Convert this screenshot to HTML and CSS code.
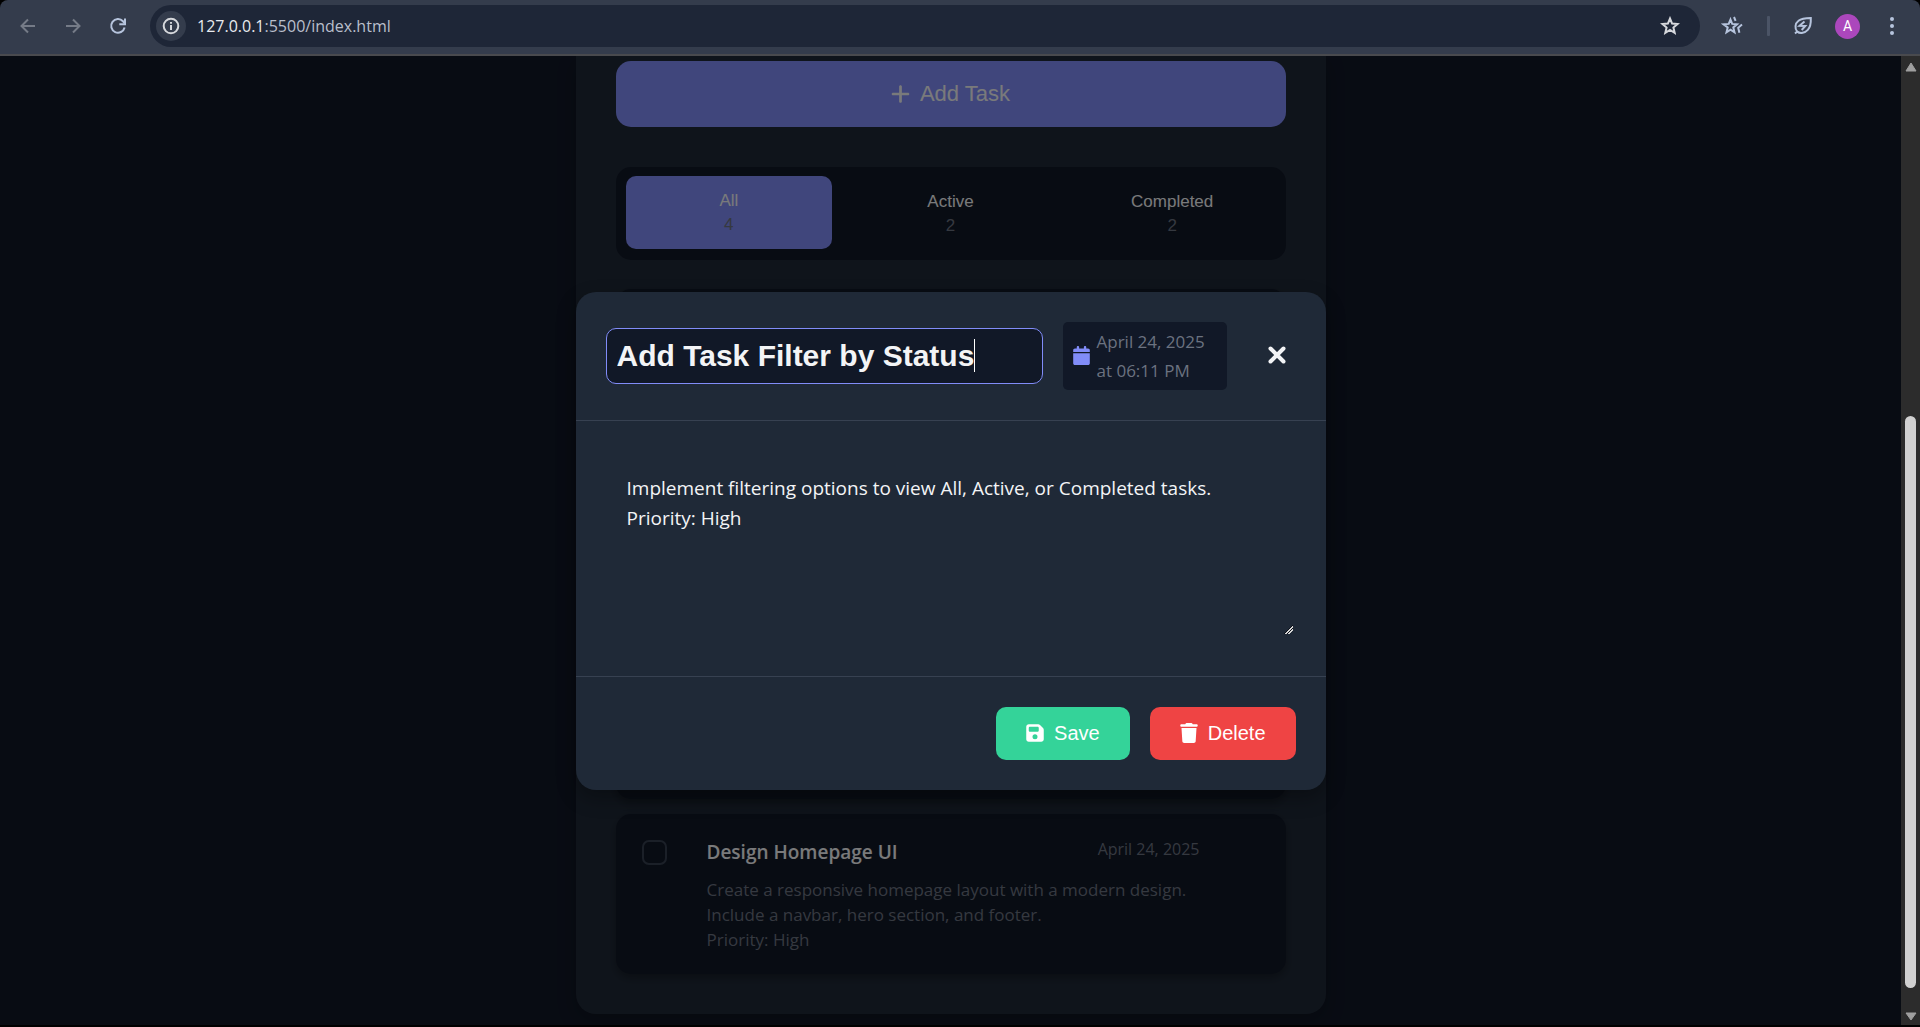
FILE: index.html
```html
<!DOCTYPE html>
<html lang="en">
<head>
<meta charset="utf-8">
<title>Task Manager</title>
<link rel="stylesheet" href="styles.css">
</head>
<body>
<div class="browser">
  <header class="toolbar">
    <button class="nav-btn dim" aria-label="Back"><svg viewBox="0 0 18 18" width="18" height="18"><path d="M16 9H3M9 2.500L2.500 9L9 15.500"/></svg></button>
    <button class="nav-btn dim" aria-label="Forward"><svg viewBox="0 0 18 18" width="18" height="18"><path d="M2 9h13M9 2.500L15.500 9L9 15.500"/></svg></button>
    <button class="nav-btn" aria-label="Reload"><svg viewBox="0 0 18 18" width="18" height="18"><path d="M15.600 10.500A6.800 6.800 0 1 1 14 4.300L15.500 6"/><path d="M10.300 7.200H16V1.500" /></svg></button>
    <div class="address">
      <button class="site-info" aria-label="Site information"><svg viewBox="0 0 18 18" width="18" height="18"><circle cx="9" cy="9" r="7.300"/><path d="M9 8v5M9 5v1.800"/></svg></button>
      <span class="url"><span class="host">127.0.0.1</span>:5500/index.html</span>
      <button class="icon-btn light" aria-label="Bookmark"><svg viewBox="0 0 20 20" width="20" height="20"><path d="M10 2.500l2.100 5.100 5.400.4-4.100 3.500 1.300 5.300L10 14l-4.700 2.800 1.300-5.300L2.500 8l5.400-.4z"/></svg></button>
    </div>
    <div class="actions">
      <button class="icon-btn" aria-label="Bookmarks"><svg viewBox="0 0 22 20" width="22" height="20"><path d="M9.500 3.500l1.700 4.400 4.800.4-3.700 3.100 1.200 4.900-4-2.600-4 2.600 1.200-4.900L2.500 8.300l5.200-.4z"/><path d="M13 1l1.600 3.800M21 8.600l-3.800 3.200 1.200 5"/></svg></button>
      <span class="divider"></span>
      <button class="icon-btn" aria-label="Energy saver"><svg viewBox="0 0 20 20" width="20" height="20"><path d="M2 17.500l2.200-1.900M4.200 15.600C1.500 12.500 2 7.500 5.500 4.800 8.500 2.300 13.500 2 17.800 2c.2 4.500-.3 9-3 11.900-2.800 3-7.500 4.200-10.600 1.700z"/><path class="thin" d="M11.500 5.500L6.500 9.800l5.800.2-3.600 4"/></svg></button>
      <button class="avatar" aria-label="Profile">A</button>
      <button class="menu" aria-label="Menu"><svg viewBox="0 0 6 20" width="6" height="20"><circle cx="3" cy="3" r="2"/><circle cx="3" cy="10" r="2"/><circle cx="3" cy="17" r="2"/></svg></button>
    </div>
  </header>

  <div class="viewport">
    <div class="page">
      <main class="container">
        <button class="add-btn"><svg viewBox="0 0 448 512" width="19" height="22"><path d="M256 80c0-17.700-14.300-32-32-32s-32 14.300-32 32V224H48c-17.700 0-32 14.300-32 32s14.300 32 32 32H192V432c0 17.700 14.300 32 32 32s32-14.300 32-32V288H400c17.700 0 32-14.300 32-32s-14.300-32-32-32H256V80z"/></svg>Add Task</button>

        <div class="filters">
          <button class="filter active">All<span>4</span></button>
          <button class="filter">Active<span>2</span></button>
          <button class="filter">Completed<span>2</span></button>
        </div>

        <ul class="tasks">
          <li class="task"></li>
          <li class="task"></li>
          <li class="task"></li>
          <li class="task">
            <input type="checkbox" class="check" id="task-4">
            <div class="task-body">
              <div class="task-head">
                <label class="task-title" for="task-4">Design Homepage UI</label>
                <time class="task-date">April 24, 2025</time>
              </div>
              <p class="task-text">Create a responsive homepage layout with a modern design.<br>Include a navbar, hero section, and footer.<br>Priority: High</p>
            </div>
          </li>
        </ul>
      </main>

      <div class="overlay">
        <section class="modal" role="dialog" aria-label="Edit task">
          <div class="modal-head">
            <div class="title-field">
              <input class="title-input" type="text" value="Add Task Filter by Status" aria-label="Task title">
              <span class="caret"></span>
            </div>
            <div class="stamp">
              <svg viewBox="0 0 448 512" width="17" height="19"><path d="M96 32V64H48C21.500 64 0 85.500 0 112v48H448V112c0-26.500-21.500-48-48-48H352V32c0-17.700-14.300-32-32-32s-32 14.300-32 32V64H160V32c0-17.700-14.300-32-32-32S96 14.300 96 32zM448 192H0V464c0 26.500 21.500 48 48 48H400c26.500 0 48-21.500 48-48V192z"/></svg>
              <time>April 24, 2025<br>at 06:11 PM</time>
            </div>
            <button class="close" aria-label="Close"><svg viewBox="0 0 18 18" width="18" height="18"><path d="M2.500 2.500l13 13M15.500 2.500l-13 13"/></svg></button>
          </div>
          <div class="modal-body">
            <textarea class="desc" aria-label="Task description">Implement filtering options to view All, Active, or Completed tasks.
Priority: High</textarea>
          </div>
          <div class="modal-foot">
            <button class="btn save"><svg viewBox="0 0 448 512" width="18" height="20"><path d="M64 32C28.700 32 0 60.700 0 96V416c0 35.300 28.700 64 64 64H384c35.300 0 64-28.700 64-64V173.300c0-17-6.700-33.300-18.700-45.300L352 50.700C340 38.700 323.700 32 306.700 32H64zm0 96c0-17.700 14.300-32 32-32H288c17.700 0 32 14.300 32 32v64c0 17.700-14.300 32-32 32H96c-17.700 0-32-14.300-32-32V128zM224 288a64 64 0 1 1 0 128 64 64 0 1 1 0-128z"/></svg>Save</button>
            <button class="btn delete"><svg viewBox="0 0 448 512" width="18" height="20"><path d="M135.200 17.700L128 32H32C14.300 32 0 46.300 0 64S14.300 96 32 96H416c17.700 0 32-14.300 32-32s-14.300-32-32-32H320l-7.200-14.300C307.400 6.800 296.300 0 284.200 0H163.800c-12.100 0-23.200 6.800-28.600 17.700zM416 128H32L53.200 467c1.600 25.300 22.600 45 47.900 45H346.900c25.300 0 46.300-19.700 47.900-45L416 128z"/></svg>Delete</button>
          </div>
        </section>
      </div>
    </div>
    <div class="scrollbar">
      <svg viewBox="0 0 12 10" width="12" height="10"><path d="M6 1L11 9H1z"/></svg>
      <div class="track"><div class="thumb"></div></div>
      <svg viewBox="0 0 12 10" width="12" height="10"><path d="M1 1h10L6 8z"/></svg>
    </div>
  </div>
</div>
</body>
</html>
```
FILE: styles.css
```css
:root {
  --ui: "Open Sans", "Noto Sans", sans-serif;
  --arial: "Liberation Sans", Arial, sans-serif;
  --bg: #111827;
  --surface: #1f2937;
  --text: #f3f4f6;
  --muted: #6b7280;
  --line: #374151;
  --accent: #818cf8;
}
* { box-sizing: border-box; margin: 0; }
body { background: #000; font-family: var(--ui); color: var(--text); }
button { border: 0; padding: 0; background: none; color: inherit; font-family: var(--arial); cursor: pointer; }
svg { display: block; flex: none; }

.browser { height: 100vh; display: flex; flex-direction: column; padding-bottom: 2px; }

/* Browser toolbar */
.toolbar {
  flex: none;
  display: flex;
  align-items: center;
  height: 56px;
  padding: 0 25px 2px 10px;
  background: #343c4c;
  border-bottom: 2px solid #494a4e;
  border-radius: 8px 8px 0 0;
}
.nav-btn { width: 45px; display: grid; place-items: center; padding-right: 10px; }
.toolbar svg { fill: none; stroke: #b6c4dd; stroke-width: 2; }
.toolbar .thin { stroke-width: 2; }
.toolbar .dim svg { stroke: #757b87; }
.address {
  flex: 1;
  display: flex;
  align-items: center;
  height: 42px;
  margin-left: 5px;
  padding: 0 20px 0 6px;
  border-radius: 21px;
  background: #1e2637;
}
.site-info { width: 30px; height: 30px; border-radius: 50%; background: #343c4c; display: grid; place-items: center; }
.toolbar .site-info svg, .toolbar .light svg { stroke: #d6d8dc; }
.url { flex: 1; margin-left: 11px; font-size: 16px; color: #b9bfcc; }
.host { color: #e8eaee; }
.actions { display: flex; align-items: center; margin-left: 21px; }
.divider { width: 3px; height: 20px; border-radius: 1px; margin: 0 23px 0 24px; background: #4b5466; }
.avatar { width: 25px; height: 25px; margin: 0 29px 0 22px; border-radius: 50%; background: #ab47bc; color: #fff; font-family: Roboto, sans-serif; font-size: 14px; }
.toolbar .menu svg { fill: #b6c4dd; stroke: none; }

/* Scrolled page */
.viewport { flex: 1; min-height: 0; display: flex; }
.page { position: relative; flex: 1; overflow: hidden; background: var(--bg); }
.container {
  max-width: 750px;
  margin: 0 auto;
  padding: 5px 40px 40px;
  background: var(--surface);
  border-radius: 0 0 20px 20px;
  box-shadow: 0 8px 20px rgba(0, 0, 0, .2);
}
.add-btn {
  display: flex;
  align-items: center;
  justify-content: center;
  gap: 10px;
  width: 100%;
  height: 66px;
  border-radius: 15px;
  background: var(--accent);
  font-size: 22px;
}
.add-btn svg, .btn svg { fill: currentColor; }
.filters { display: flex; gap: 15px; margin: 40px 0 29px; padding: 10px; border-radius: 15px; background: var(--bg); }
.filter { flex: 1; padding: 15px 0 14px; border-radius: 10px; font-size: 17px; line-height: 20px; }
.filter span { display: block; margin-top: 4px; color: var(--muted); }
.filter.active { background: var(--accent); transform: translateY(-1px); }
.tasks { display: flex; flex-direction: column; gap: 15px; padding: 0; list-style: none; }
.task {
  display: flex;
  gap: 40px;
  min-height: 160px;
  padding: 26px 26px 20px;
  border-radius: 15px;
  background: var(--bg);
  box-shadow: 0 4px 8px rgba(0, 0, 0, .3);
}
.check { appearance: none; flex: none; width: 25px; height: 25px; border: 2px solid var(--line); border-radius: 7px; }
.task-body { flex: 1; padding-right: 60px; }
.task-head { display: flex; justify-content: space-between; }
.task-title { font-size: 19px; font-weight: 600; line-height: 24px; }
.task-date { color: var(--muted); font-size: 16px; line-height: 18px; }
.task-text { margin-top: 13px; color: var(--muted); font-size: 17px; line-height: 25px; white-space: nowrap; }

/* Edit dialog */
.overlay { position: absolute; inset: 0; display: flex; align-items: center; justify-content: center; background: rgba(0, 0, 0, .5); }
.modal { width: 750px; max-width: 100%; border-radius: 20px; background: var(--surface); box-shadow: 0 8px 20px rgba(0, 0, 0, .3); }
.modal-head { display: flex; align-items: center; gap: 20px; padding: 30px; border-bottom: 1px solid var(--line); }
.title-field { position: relative; flex: 1; min-width: 0; }
.title-input {
  display: block;
  width: 100%;
  height: 56px;
  padding: 0 10px;
  border: 1px solid var(--accent);
  border-radius: 10px;
  outline: 0;
  background: var(--bg);
  color: var(--text);
  caret-color: transparent;
  font: bold 30px var(--arial);
}
.caret { position: absolute; left: 368px; top: 11px; width: 1px; height: 33px; background: #fff; }
.stamp { display: flex; align-items: center; gap: 7px; width: 164px; height: 68px; padding: 0 10px; border-radius: 5px; background: var(--bg); color: var(--muted); font-size: 17px; line-height: 29px; }
.stamp svg { fill: var(--accent); }
.stamp time { white-space: nowrap; }
.close { width: 37px; height: 48px; display: grid; place-items: center; margin-left: 12px; padding-bottom: 2px; }
.close svg { fill: none; stroke: var(--text); stroke-width: 4; stroke-linecap: round; }
.modal-body { padding: 30px; }
.desc {
  display: block;
  width: 100%;
  height: 187px;
  margin-bottom: 8px;
  padding: 21px 20px 20px;
  border: 1px solid transparent;
  outline: 0;
  background: transparent;
  color: var(--text);
  font: 19px/30px var(--ui);
  resize: vertical;
}
.desc::-webkit-resizer {
  background: linear-gradient(135deg, transparent 45%, #0b0f18 45% 52%, #d6d6d6 52% 62%, #0b0f18 62% 72%, #d6d6d6 72% 80%, transparent 80%) 4px 3px / 9px 9px no-repeat;
}
.modal-foot { display: flex; justify-content: flex-end; gap: 20px; padding: 30px; border-top: 1px solid var(--line); }
.btn { display: flex; align-items: center; gap: 10px; height: 53px; padding: 0 30px; border-radius: 10px; color: #fff; font-size: 20px; }
.save { background: #34d399; }
.delete { background: #ef4444; }

/* Scrollbar */
.scrollbar { width: 19px; display: flex; flex-direction: column; align-items: center; padding: 6px 0 3px; background: #2c2c2c; }
.scrollbar svg { fill: #9f9f9f; stroke: #9f9f9f; stroke-linejoin: round; }
.track { flex: 1; display: flex; align-items: flex-end; padding: 8px 0 24px; }
.thumb { width: 11px; height: 63%; border-radius: 6px; background: #d1d1d1; }
```
